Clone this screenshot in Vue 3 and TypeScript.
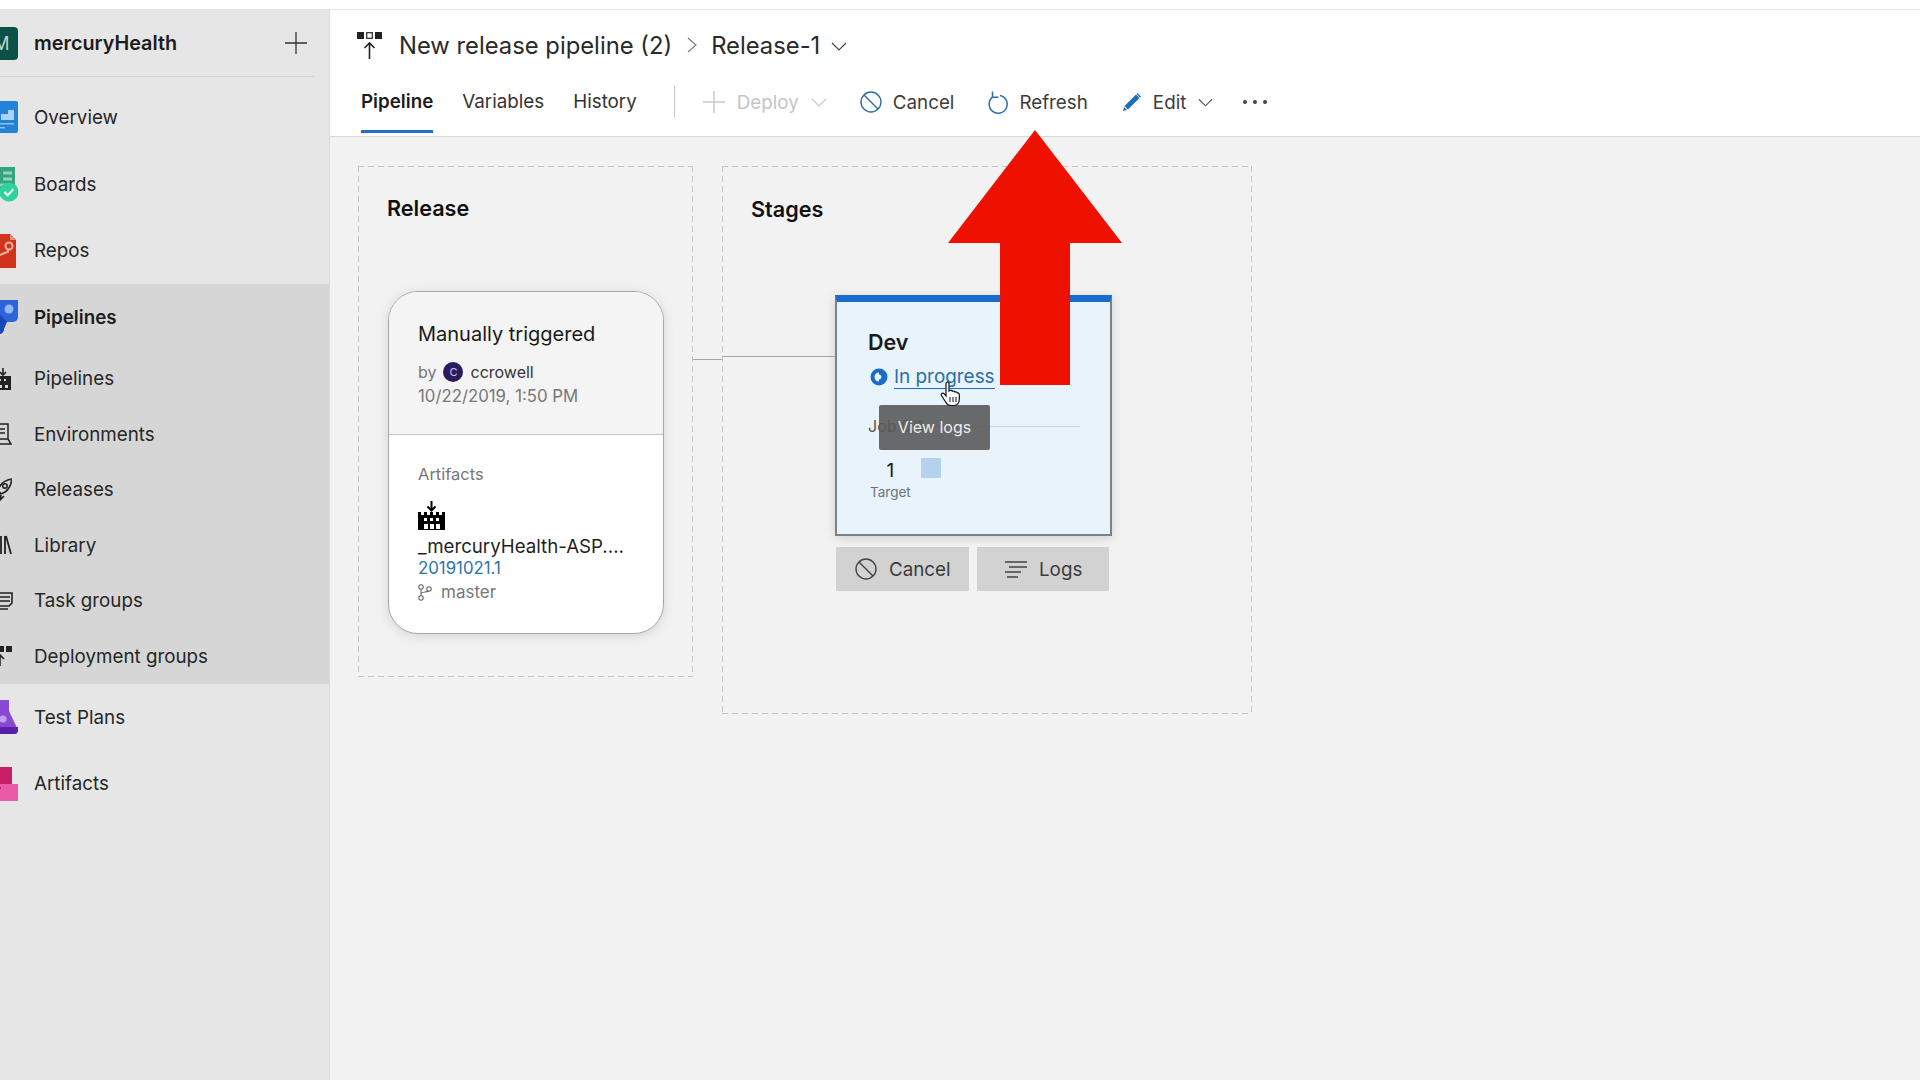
<script setup lang="ts">
const tabs: { label: string; active?: boolean }[] = [
  { label: 'Pipeline', active: true },
  { label: 'Variables' },
  { label: 'History' },
]
</script>

<template>
  <div class="page">
    <div class="top-strip"></div>
    <div class="shell">
      <aside class="sidebar">
        <div class="project">
          <div class="project-logo">M</div>
          <span class="project-name">mercuryHealth</span>
          <svg class="project-add" width="24" height="24" viewBox="0 0 24 24"><path d="M12 1v22M1 12h22" stroke="#333" stroke-width="1.3" fill="none" /></svg>
        </div>

        <nav class="nav">
          <a class="nav-item">
            <span class="nav-icon">
              <svg width="33" height="32" viewBox="0 0 33 32">
                <rect width="33" height="32" rx="2" fill="#2580d8" />
                <path d="M16 17v-4h7V9h6v10H16z" fill="#a9d4f5" />
                <path d="M14 22h15v1.5H14zM14 26h6v1.5h-6z" fill="#8cc3ef" />
              </svg>
            </span>
            Overview
          </a>
          <a class="nav-item">
            <span class="nav-icon">
              <svg width="33" height="35" viewBox="0 0 33 35">
                <rect x="0" y="0" width="30" height="28" fill="#35a47e" />
                <path d="M18 6h9M18 12h9M4 18h22" stroke="#8fd6bb" stroke-width="3" />
                <circle cx="24" cy="25" r="9.5" fill="#2fd39b" />
                <path d="M19.5 25l3.2 3.2 5.6-6" stroke="#fff" stroke-width="2" fill="none" />
              </svg>
            </span>
            Boards
          </a>
          <a class="nav-item">
            <span class="nav-icon">
              <svg width="32" height="34" viewBox="0 0 32 34">
                <path d="M0 0h25l6 6v28H0z" fill="#d0341c" />
                <path d="M25 0l6 6h-6z" fill="#eb8f7c" />
                <path d="M8 24l14-6" stroke="#f5b19f" stroke-width="2" fill="none" />
                <circle cx="24" cy="12" r="3.5" fill="none" stroke="#f5b19f" stroke-width="2" />
                <path d="M23 16v3" stroke="#f5b19f" stroke-width="2" />
              </svg>
            </span>
            Repos
          </a>

          <div class="nav-group">
            <a class="nav-item nav-item-active">
              <span class="nav-icon">
                <svg width="33" height="34" viewBox="0 0 33 34">
                  <path d="M14 0h19v17a5 5 0 0 1-5 5H19v7a5 5 0 0 1-5 5H0V18a5 5 0 0 1 5-5h9z" fill="#2d63d8" />
                  <path d="M0 34V18a5 5 0 0 1 5-5h9l8 9-3 7a5 5 0 0 1-5 5z" fill="#1b46b8" />
                  <circle cx="24" cy="9" r="4.5" fill="#94b6f2" />
                </svg>
              </span>
              Pipelines
            </a>
            <a class="nav-sub">
              <span class="nav-icon">
                <svg width="27" height="22" viewBox="0 0 27 22">
                  <path d="M10 8h16v14H0V8z" fill="#222" />
                  <path d="M18 0v7M15 4l3 3 3-3" stroke="#222" stroke-width="1.6" fill="none" />
                  <path d="M14 11h2v2h-2zM19 11h2v2h-2zM14 17h3v3h-3zM20 17h3v3h-3z" fill="#d6d6d6" />
                </svg>
              </span>
              Pipelines
            </a>
            <a class="nav-sub">
              <span class="nav-icon">
                <svg width="27" height="22" viewBox="0 0 27 22" fill="none" stroke="#222" stroke-width="1.5">
                  <rect x="8" y="1" width="15" height="15" />
                  <path d="M14 6h6M14 10h6M23 16l3 5H8" />
                </svg>
              </span>
              Environments
            </a>
            <a class="nav-sub">
              <span class="nav-icon">
                <svg width="27" height="24" viewBox="0 0 27 24" fill="none" stroke="#222" stroke-width="1.6">
                  <path d="M27 1c-7 1-12 5-14 11l3 4c6-2 10-8 11-15z" />
                  <circle cx="20" cy="8" r="2.2" />
                  <path d="M13 11l-4 2 3 3M16 17l-1 5 4-4" />
                </svg>
              </span>
              Releases
            </a>
            <a class="nav-sub">
              <span class="nav-icon">
                <svg width="27" height="20" viewBox="0 0 27 20" fill="none" stroke="#222" stroke-width="1.8">
                  <path d="M16 1v18M20 1v18M21 1l5 18" />
                </svg>
              </span>
              Library
            </a>
            <a class="nav-sub">
              <span class="nav-icon">
                <svg width="28" height="18" viewBox="0 0 28 18" fill="none" stroke="#222" stroke-width="1.6">
                  <path d="M12 1h15v10l-3 3H10M15 5h10M15 9h10M10 17h13" />
                  <path d="M10 5h5M10 9h5" />
                </svg>
              </span>
              Task groups
            </a>
            <a class="nav-sub">
              <span class="nav-icon">
                <svg width="27" height="20" viewBox="0 0 27 20">
                  <rect x="6" y="0" width="5" height="5" fill="none" stroke="#222" stroke-width="1.2" />
                  <rect x="13" y="0" width="6" height="6" fill="#222" />
                  <rect x="21" y="0" width="6" height="6" fill="#222" />
                  <path d="M15 20V9M11 13l4-4 4 4" stroke="#222" stroke-width="1.6" fill="none" />
                </svg>
              </span>
              Deployment groups
            </a>
          </div>

          <a class="nav-item">
            <span class="nav-icon">
              <svg width="33" height="34" viewBox="0 0 33 34">
                <path d="M6 0h18v11l9 19a4 4 0 0 1-4 4H0V12z" fill="#8a49d3" />
                <path d="M0 27h33v3a4 4 0 0 1-4 4H0z" fill="#5a1ea8" />
                <circle cx="18" cy="19" r="3.5" fill="#c39df0" />
              </svg>
            </span>
            Test Plans
          </a>
          <a class="nav-item">
            <span class="nav-icon">
              <svg width="33" height="34" viewBox="0 0 33 34">
                <rect x="0" y="0" width="27" height="17" fill="#c81e66" />
                <rect x="0" y="17" width="33" height="17" fill="#ea5aa6" />
                <rect x="10" y="20" width="6" height="2" fill="#b81f63" />
              </svg>
            </span>
            Artifacts
          </a>
        </nav>
      </aside>

      <main class="main">
        <header class="header">
          <div class="title-row">
            <svg class="title-icon" width="26" height="27" viewBox="0 0 26 27">
              <rect x="0" y="0" width="7" height="7" fill="#222" />
              <rect x="9.7" y="0.7" width="5.6" height="5.6" fill="none" stroke="#222" stroke-width="1.2" />
              <rect x="18" y="0" width="7" height="7" fill="#222" />
              <path d="M12.5 27V11M7.5 16l5-5 5 5" stroke="#222" stroke-width="1.6" fill="none" />
            </svg>
            <span class="title-text">New release pipeline (2)</span>
            <svg class="crumb-sep" width="12" height="18" viewBox="0 0 12 18"><path d="M2 2l8 7-8 7" stroke="#777" stroke-width="1.1" fill="none" /></svg>
            <span class="title-text">Release-1</span>
            <svg class="title-chevron" width="16" height="10" viewBox="0 0 16 10"><path d="M1 1l7 7 7-7" stroke="#444" stroke-width="1.2" fill="none" /></svg>
          </div>

          <div class="tab-row">
            <a v-for="tab in tabs" :key="tab.label" class="tab" :class="{ 'tab-active': tab.active }">{{ tab.label }}</a>
            <div class="tab-divider"></div>

            <button class="tool tool-disabled tool-deploy">
              <svg width="22" height="22" viewBox="0 0 22 22"><path d="M11 0v22M0 11h22" stroke="#c8c8c8" stroke-width="1.4" fill="none" /></svg>
              <span>Deploy</span>
              <svg class="tool-chevron" width="16" height="10" viewBox="0 0 16 10"><path d="M1 1l7 7 7-7" stroke="#c8c8c8" stroke-width="1.2" fill="none" /></svg>
            </button>
            <button class="tool tool-cancel">
              <svg width="22" height="22" viewBox="0 0 22 22" fill="none" stroke="#2f6ea5" stroke-width="1.4"><circle cx="11" cy="11" r="10" /><path d="M4 4l14 14" /></svg>
              <span>Cancel</span>
            </button>
            <button class="tool tool-refresh">
              <svg width="21" height="23" viewBox="0 0 21 23" fill="none" stroke="#2f6ea5" stroke-width="1.5"><path d="M13 4.400a9 9 0 1 1-7.500 1.800" /><path d="M5.500 0.500v5.700h6" /></svg>
              <span>Refresh</span>
            </button>
            <button class="tool tool-edit">
              <svg width="20" height="20" viewBox="0 0 20 20"><path d="M14 2.500l3.500 3.500L6 17.500 2.500 14z" fill="#1f6db5" /><path d="M15.500 1l3.500 3.500-1 1L14.500 2z" fill="#1f6db5" /><path d="M2 15l3 3-4 1z" fill="#1f6db5" /></svg>
              <span>Edit</span>
              <svg class="tool-chevron" width="15" height="10" viewBox="0 0 16 10"><path d="M1 1l7 7 7-7" stroke="#555" stroke-width="1.2" fill="none" /></svg>
            </button>
            <button class="tool-more">
              <span></span><span></span><span></span>
            </button>
          </div>
        </header>

        <section class="canvas">
          <div class="lane lane-release">
            <h2 class="lane-title">Release</h2>
            <div class="release-card">
              <div class="release-top">
                <div class="release-trigger">Manually triggered</div>
                <div class="release-by">
                  by
                  <span class="avatar">C</span>
                  <span class="release-user">ccrowell</span>
                </div>
                <div class="release-date">10/22/2019, 1:50 PM</div>
              </div>
              <div class="release-bottom">
                <div class="artifact-label">Artifacts</div>
                <svg class="artifact-icon" width="27" height="29" viewBox="0 0 27 29">
                  <path d="M0 11h3v3h3v-3h3v3h3v-3h3v3h3v-3h3v3h3v-3h3v18H0z" fill="#000" />
                  <path d="M13.500 0v9M9.500 5.500l4 4 4-4" stroke="#000" stroke-width="2" fill="none" />
                  <path d="M6 17h3v3H6zM12 17h3v3h-3zM18 17h3v3h-3z" fill="#fff" />
                  <path d="M6 23h4v5H6zM12 23h4v5h-4zM18 23h4v5h-4z" fill="#fff" />
                </svg>
                <div class="artifact-name">_mercuryHealth-ASP....</div>
                <div class="artifact-build">20191021.1</div>
                <div class="artifact-branch">
                  <svg width="14" height="17" viewBox="0 0 14 17" fill="none" stroke="#666" stroke-width="1.1">
                    <circle cx="3" cy="3" r="2.2" /><circle cx="3" cy="14" r="2.2" /><circle cx="11" cy="5" r="2.2" />
                    <path d="M3 5.200v6.600M3 10c0-2.500 6-1.500 7.500-3" />
                  </svg>
                  master
                </div>
              </div>
            </div>
          </div>

          <div class="lane lane-stages">
            <div class="connector connector-left"></div>
            <div class="connector connector-right"></div>
            <h2 class="lane-title">Stages</h2>
            <div class="stage">
              <div class="stage-card">
                <div class="stage-name">Dev</div>
                <div class="stage-status">
                  <svg width="18" height="18" viewBox="0 0 18 18">
                    <circle cx="9" cy="9" r="8.500" fill="#1a6ccc" />
                    <path d="M9 4.500a4.500 4.500 0 0 0 0 9z" fill="#e8f3fb" />
                    <path d="M9 6.500a2.500 2.500 0 0 1 0 5z" fill="#e8f3fb" />
                  </svg>
                  <a class="stage-link">In progress</a>
                </div>
                <div class="stage-jobs">
                  <span class="stage-jobs-label">Job 0/1</span>
                  <span class="stage-jobs-line"></span>
                </div>
                <div class="stage-targets">
                  <div class="target">
                    <div class="target-count">1</div>
                    <div class="target-label">Target</div>
                  </div>
                  <div class="target-square"></div>
                </div>
                <div class="tooltip">View logs</div>
                <svg class="hand" width="22" height="26" viewBox="0 0 22 26">
                  <path d="M6 2.500c0-2 3-2 3 0V10l1-.5c1-.5 2 0 2.300.8 1-.6 2.200-.2 2.500.7 1-.5 2.300 0 2.500 1 1-.3 2 .3 2 1.500v5c0 3-2 6-5 6h-4c-2.500 0-3.500-1.500-5-4L1.500 14.500c-1-1.800 1.200-3.200 2.500-1.800l2 2.300z" fill="#fff" stroke="#111" stroke-width="1.200" />
                  <path d="M10 16v5M13 16v5M16 16v5" stroke="#111" stroke-width="1" fill="none" />
                </svg>
              </div>
              <div class="stage-actions">
                <button class="stage-btn stage-btn-cancel">
                  <svg width="22" height="22" viewBox="0 0 22 22" fill="none" stroke="#444" stroke-width="1.4"><circle cx="11" cy="11" r="10" /><path d="M4 4l14 14" /></svg>
                  Cancel
                </button>
                <button class="stage-btn stage-btn-logs">
                  <svg width="24" height="18" viewBox="0 0 24 18" fill="none" stroke="#444" stroke-width="1.3"><path d="M1 2h22M5 7h18M1 12h16M3 17h11" /></svg>
                  Logs
                </button>
              </div>
            </div>
          </div>
        </section>

        <svg class="red-arrow" width="174" height="255" viewBox="0 0 174 255">
          <path d="M87 0l87 113h-52v142H52V113H0z" fill="#ee1100" />
        </svg>
      </main>
    </div>
  </div>
</template>

<style>
html,
body {
  margin: 0;
  overflow: hidden;
  background: #fff;
}
</style>

<style scoped>
.page {
  width: 1920px;
  height: 1080px;
  display: flex;
  flex-direction: column;
  font-family: Inter, "Liberation Sans", sans-serif;
  color: #222;
  background: #fff;
  overflow: hidden;
}

.top-strip {
  height: 9px;
  border-bottom: 1px solid #e6e6e6;
  flex-shrink: 0;
}

.shell {
  flex: 1;
  display: flex;
  min-height: 0;
}

.sidebar {
  width: 329px;
  flex-shrink: 0;
  background: #e6e6e6;
  border-right: 1px solid #dcdcdc;
  overflow: hidden;
}

.project {
  height: 67px;
  margin-right: 15px;
  border-bottom: 1px solid #d2d2d2;
  display: flex;
  align-items: center;
  box-sizing: border-box;
}

.project-logo {
  width: 33px;
  height: 33px;
  margin-left: -15px;
  margin-right: 16px;
  border-radius: 4px;
  background: #0b5145;
  color: #b9d8d0;
  font-size: 18px;
  line-height: 33px;
  text-align: center;
  flex-shrink: 0;
}

.project-name {
  font-size: 19.8px;
  font-weight: 600;
  color: #1c1c1c;
}

.project-add {
  margin-left: auto;
  margin-right: 6px;
}

.nav {
  padding-top: 7px;
}

.nav-item,
.nav-sub {
  display: flex;
  align-items: center;
  font-size: 18.8px;
  color: #262626;
}

.nav-item {
  height: 66.7px;
}

.nav-sub {
  height: 55.500px;
}

.nav-item-active {
  font-weight: 600;
  color: #1c1c1c;
}

.nav-group {
  background: #d6d6d6;
}

.nav-icon {
  width: 49px;
  margin-left: -15px;
  flex-shrink: 0;
  display: flex;
  align-items: center;
}

.main {
  flex: 1;
  position: relative;
  background: #f2f2f2;
  display: flex;
  flex-direction: column;
  min-width: 0;
}

.header {
  height: 126px;
  background: #fff;
  border-bottom: 1px solid #d8d8d8;
  flex-shrink: 0;
}

.title-row {
  height: 70px;
  padding-left: 27px;
  display: flex;
  align-items: center;
  box-sizing: border-box;
}

.title-icon {
  margin-right: 16px;
}

.title-text {
  font-size: 23.8px;
  color: #2a2a2a;
}

.crumb-sep {
  margin: 0 13px 0 14px;
}

.title-chevron {
  margin-left: 11px;
  margin-top: 3px;
}

.tab-row {
  height: 53px;
  padding-left: 31px;
  display: flex;
  align-items: flex-start;
}

.tab {
  padding-bottom: 6px;
  margin-right: 29px;
  height: 44px;
  line-height: 44px;
  font-size: 18.8px;
  color: #333;
  border-bottom: 3px solid transparent;
}

.tab-active {
  font-weight: 600;
  color: #1c1c1c;
  border-bottom-color: #1f6fc4;
}

.tab-divider {
  width: 1px;
  height: 32px;
  margin: 6px 28px 0 8px;
  background: #c8c8c8;
}

.tool {
  height: 44px;
  padding: 0;
  border: 0;
  background: none;
  display: flex;
  align-items: center;
  font: inherit;
  font-size: 18.8px;
  color: #3c3c3c;
}

.tool span {
  margin-left: 11px;
}

.tool-disabled {
  color: #c4c4c4;
}

.tool-deploy {
  margin-right: 33px;
}

.tool-deploy span {
  margin-left: 12px;
}

.tool-cancel {
  margin-right: 33px;
}

.tool-refresh {
  margin-right: 34px;
}

.tool-edit {
  margin-right: 30px;
}

.tool-chevron {
  margin-left: 12px;
  margin-top: 2px;
}

.tool-more {
  height: 44px;
  padding: 0;
  border: 0;
  background: none;
  display: flex;
  align-items: center;
  gap: 6px;
}

.tool-more span {
  width: 4px;
  height: 4px;
  border-radius: 50%;
  background: #444;
}

.canvas {
  flex: 1;
  padding: 29px 28px;
  display: flex;
  align-items: flex-start;
  gap: 29px;
}

/* long dashes, a 1px dashed border comes out too short */
.lane {
  position: relative;
  box-sizing: border-box;
  background:
    linear-gradient(90deg, #c4c4c4 60%, transparent 0) top left / 10px 1px repeat-x,
    linear-gradient(90deg, #c4c4c4 60%, transparent 0) bottom left / 10px 1px repeat-x,
    linear-gradient(#c4c4c4 60%, transparent 0) top left / 1px 10px repeat-y,
    linear-gradient(#c4c4c4 60%, transparent 0) top right / 1px 10px repeat-y;
}

.lane-release {
  width: 335px;
  height: 511px;
  padding: 30px 0 0 29px;
}

.lane-stages {
  width: 530px;
  height: 548px;
  padding: 31px 0 0 29px;
}

.lane-title {
  margin: 0;
  font-size: 21.600px;
  line-height: 24px;
  font-weight: 600;
  color: #111;
}

.release-card {
  width: 276px;
  height: 343px;
  margin-top: 71px;
  margin-left: 1px;
  border: 1.500px solid #a8a8a8;
  border-radius: 30px;
  box-shadow: 0 2px 12px rgba(0, 0, 0, 0.12);
  background: #fff;
  box-sizing: border-box;
  overflow: hidden;
}

.release-top {
  height: 143px;
  padding: 29px 0 0 29px;
  background: #f4f4f4;
  border-bottom: 1px solid #c6c6c6;
  box-sizing: border-box;
}

.release-trigger {
  font-size: 20px;
  line-height: 26px;
  color: #1a1a1a;
}

.release-by {
  margin-top: 12px;
  height: 25px;
  display: flex;
  align-items: center;
  font-size: 16px;
  color: #777;
}

.avatar {
  width: 20px;
  height: 20px;
  margin: 0 7px 0 7px;
  border-radius: 50%;
  background: #2b1a5e;
  color: #cfc6ea;
  font-size: 11px;
  line-height: 20px;
  text-align: center;
}

.release-user {
  color: #333;
}

.release-date {
  font-size: 16.800px;
  line-height: 24px;
  color: #777;
}

.release-bottom {
  padding: 28px 0 0 29px;
}

.artifact-label {
  font-size: 16.500px;
  line-height: 22px;
  color: #777;
}

.artifact-icon {
  display: block;
  margin-top: 16px;
}

.artifact-name {
  margin-top: 4px;
  font-size: 18.700px;
  line-height: 25px;
  color: #1f1f1f;
  white-space: nowrap;
}

.artifact-build {
  font-size: 16.800px;
  line-height: 18px;
  color: #2a72a8;
}

.artifact-branch {
  margin-top: 3px;
  height: 24px;
  display: flex;
  align-items: center;
  gap: 9px;
  font-size: 17px;
  color: #777;
}

.connector {
  position: absolute;
  height: 1px;
  background: #a8a8a8;
}

.connector-left {
  left: -29px;
  width: 29px;
  top: 193px;
}

.connector-right {
  left: 0;
  width: 113px;
  top: 190px;
}

.stage {
  width: 277px;
  margin: 74px 0 0 84px;
}

.stage-card {
  position: relative;
  height: 241px;
  padding: 28px 30px 0 31px;
  border: 2px solid #7c8288;
  border-top: 7px solid #1a6ccc;
  background: #e8f3fb;
  box-shadow: 0 2px 10px rgba(0, 0, 0, 0.14);
  box-sizing: border-box;
}

.stage-name {
  font-size: 21.500px;
  line-height: 24px;
  font-weight: 600;
  color: #1a1a1a;
}

.stage-status {
  margin-top: 11px;
  height: 24px;
  display: flex;
  align-items: center;
  gap: 6px;
  padding-left: 2px;
}

.stage-link {
  font-size: 18.900px;
  line-height: 22px;
  color: #2a6ea8;
  border-bottom: 1.500px solid #1a6ccc;
}

.stage-jobs {
  margin-top: 27px;
  height: 20px;
  display: flex;
  align-items: center;
  gap: 8px;
}

.stage-jobs-label {
  font-size: 16px;
  color: #555;
  white-space: nowrap;
}

.stage-jobs-line {
  flex: 1;
  height: 1px;
  background: #cdd6dc;
}

.stage-targets {
  margin-top: 25px;
  display: flex;
  align-items: flex-start;
  gap: 10px;
  padding-left: 2px;
}

.target {
  text-align: center;
}

.target-count {
  font-size: 19px;
  line-height: 20px;
  color: #1a1a1a;
}

.target-label {
  margin-top: 3px;
  font-size: 13.500px;
  line-height: 16px;
  color: #6d7278;
}

.target-square {
  width: 20px;
  height: 20px;
  margin-top: -3px;
  background: #b3d2ee;
}

.tooltip {
  position: absolute;
  left: 42px;
  top: 103px;
  width: 111px;
  height: 45px;
  border-radius: 2px;
  background: rgba(90, 90, 90, 0.9);
  color: #ececec;
  font-size: 16px;
  line-height: 45px;
  text-align: center;
}

.hand {
  position: absolute;
  left: 103px;
  top: 79px;
}

.stage-actions {
  margin-top: 11px;
  padding-left: 1px;
  display: flex;
  gap: 8px;
}

.stage-btn {
  height: 44px;
  padding: 0;
  border: 0;
  background: #d2d2d2;
  display: flex;
  align-items: center;
  font: inherit;
  font-size: 18.800px;
  color: #3c3c3c;
}

.stage-btn-cancel {
  width: 133px;
  padding-left: 19px;
  gap: 12px;
}

.stage-btn-logs {
  width: 132px;
  padding-left: 27px;
  gap: 11px;
}

.red-arrow {
  position: absolute;
  left: 618px;
  top: 120px;
}
</style>
